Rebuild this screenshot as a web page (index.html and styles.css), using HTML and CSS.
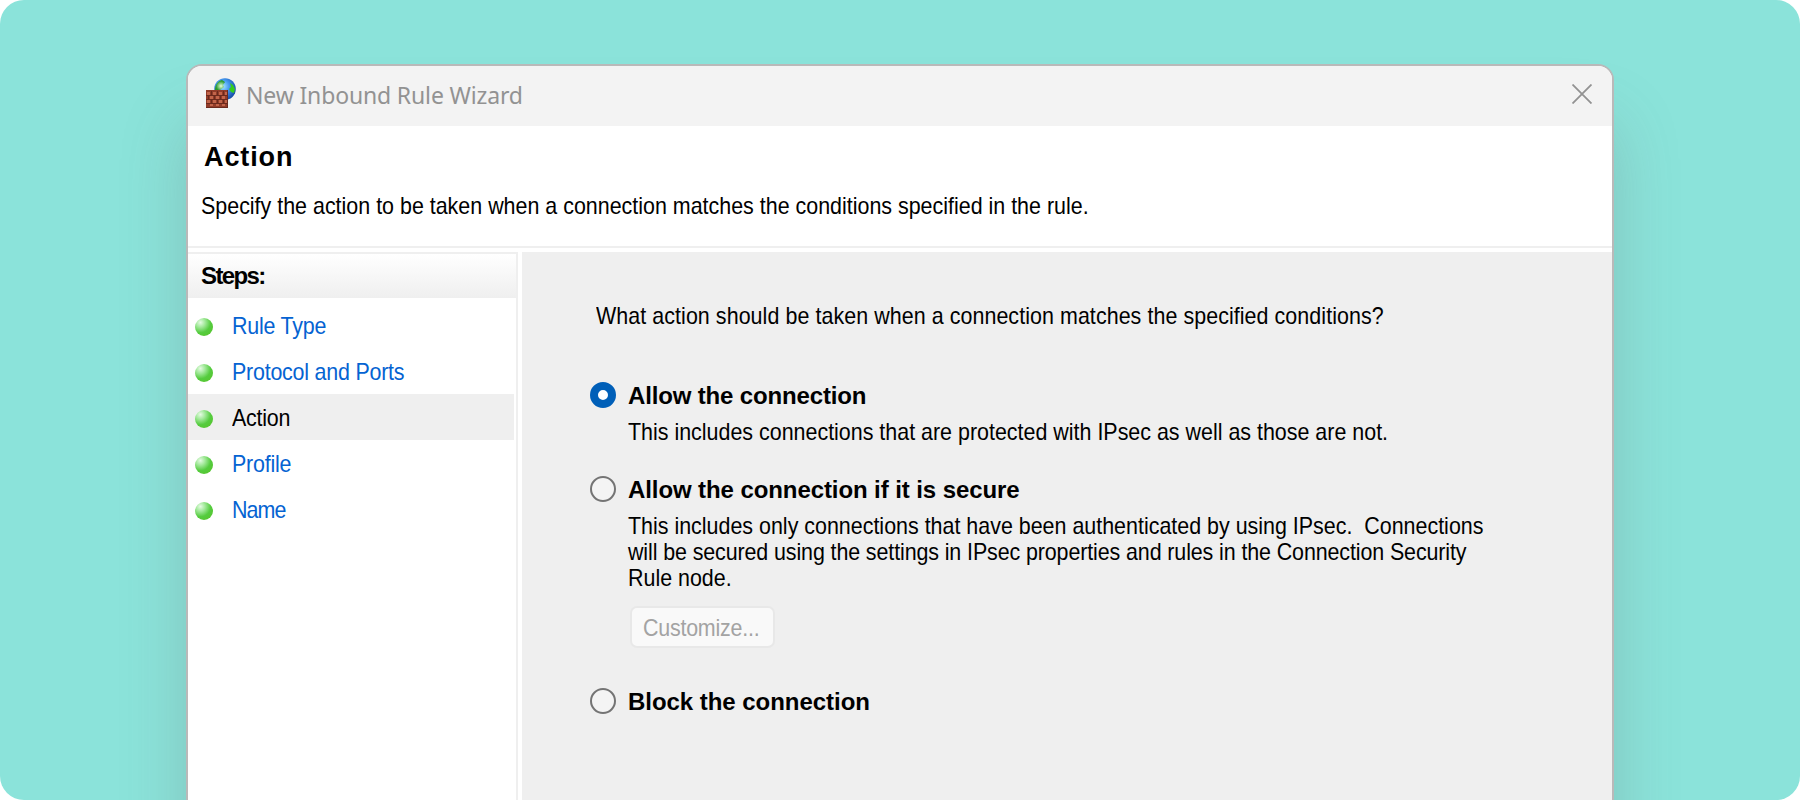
FILE: index.html
```html
<!DOCTYPE html>
<html lang="en">
<head>
<meta charset="utf-8">
<title>New Inbound Rule Wizard</title>
<link rel="stylesheet" href="styles.css">
</head>
<body>
<main class="stage">
  <section class="window">
    <header class="titlebar">
      <svg class="app-icon" width="30" height="30" viewBox="0 0 30 30">
        <defs>
          <radialGradient id="globe" cx="40%" cy="38%" r="65%">
            <stop offset="0" stop-color="#a5e6ff"/><stop offset=".45" stop-color="#4499f2"/><stop offset="1" stop-color="#164ba5"/>
          </radialGradient>
          <radialGradient id="land" cx="60%" cy="60%"><stop offset="0" stop-color="#e5ffdc"/><stop offset="1" stop-color="#2a9a2f"/></radialGradient>
        </defs>
        <circle cx="19" cy="11" r="10.8" fill="url(#globe)"/>
        <path d="M9 12C9 7 12 3 16 2l3 2-2 3 1 2-4 3z" fill="url(#land)"/>
        <path d="M24 5l3 2 2 4-1 4-3-1-2-3 2-2z" fill="#35cc1d"/>
        <path d="M0 12h22v18H0z" fill="#923c29"/>
        <path d="M1 14h3v3H1zM7 14h3v3H7zM13 14h3v3h-3zM19 14h2v3h-2zM4 18h3v3H4zM10 18h3v3h-3zM16 18h3v3h-3zM1 22h3v3H1zM7 22h3v3H7zM13 22h3v3h-3zM19 22h2v3h-2zM4 26h3v2H4zM10 26h3v2h-3zM16 26h3v2h-3z" fill="#c2654a"/>
        <path d="M0 17.5h22M0 21.5h22M0 25.5h22M0 29.5h22M21.500 12v18" stroke="#6b2a1d" fill="none"/>
        <path d="M5.500 13v4M11.500 13v4M17.500 13v4M2.500 18v4M8.500 18v4M14.500 18v4M5.500 22v4M11.500 22v4M17.500 22v4" stroke="#6b2a1d" fill="none"/>
      </svg>
      <h1 class="title">New Inbound Rule Wizard</h1>
      <svg class="close" width="20" height="20" viewBox="0 0 20 20"><path d="M.5.5l19 19M19.500.5l-19 19" stroke="#929292" stroke-width="1.8"/></svg>
    </header>
    <div class="intro">
      <h2 class="page-name">Action</h2>
      <p class="page-desc narrow">Specify the action to be taken when a connection matches the conditions specified in the rule.</p>
    </div>
    <div class="body">
      <nav class="sidebar">
        <h3 class="steps-title"><span>Steps:</span></h3>
        <ul class="steps">
          <li class="step"><i class="dot"></i><span class="narrow">Rule Type</span></li>
          <li class="step"><i class="dot"></i><span class="narrow">Protocol and Ports</span></li>
          <li class="step current"><i class="dot"></i><span class="narrow">Action</span></li>
          <li class="step"><i class="dot"></i><span class="narrow">Profile</span></li>
          <li class="step"><i class="dot"></i><span class="narrow name">Name</span></li>
        </ul>
      </nav>
      <div class="content">
        <p class="question narrow">What action should be taken when a connection matches the specified conditions?</p>
        <div class="option allow">
          <i class="radio checked"></i>
          <b class="label">Allow the connection</b>
          <p class="note narrow">This includes connections that are protected with IPsec as well as those are not.</p>
        </div>
        <div class="option secure">
          <i class="radio"></i>
          <b class="label long">Allow the connection if it is secure</b>
          <p class="note narrow">This includes only connections that have been authenticated by using IPsec.  Connections
<span class="tight">will be secured using the settings in IPsec properties and rules in the Connection Security</span>
Rule node.</p>
          <button class="customize" disabled><span class="narrow">Customize...</span></button>
        </div>
        <div class="option">
          <i class="radio"></i>
          <b class="label block">Block the connection</b>
        </div>
      </div>
    </div>
  </section>
</main>
</body>
</html>
```
FILE: styles.css
```css
* { box-sizing: border-box; }
body { margin: 0; background: #fff; font: 24px/26px "Liberation Sans", Arial, sans-serif; color: #000; }
h1, h2, h3, p, ul { margin: 0; padding: 0; list-style: none; }
.stage { width: 1800px; height: 800px; padding: 64px 186px 0; border-radius: 24px; background: #8be3da; overflow: hidden; }
.window { width: 1428px; height: 900px; border: 2px solid #b9b9b9; border-radius: 16px; background: #fff; overflow: hidden; display: flex; flex-direction: column; box-shadow: 0 60px 64px rgba(100, 100, 100, .25); }
.titlebar { height: 60px; flex: none; display: flex; align-items: center; padding: 0 20px 0 18px; background: #f3f3f3; }
.app-icon { margin-top: -6px; }
.title { margin: -2px 0 0 10px; font: 23px/30px "Noto Sans", "Open Sans", sans-serif; letter-spacing: -.15px; color: #929292; }
.close { margin: -4px 0 0 auto; }
.intro { height: 122px; flex: none; padding: 17px 13px 0; border-bottom: 2px solid #efefef; }
.page-name { margin-left: 3px; font-size: 27px; line-height: 28px; letter-spacing: .9px; }
.page-desc { margin-top: 22px; white-space: nowrap; }
/* Condensed setting of the dialog typeface */
.narrow { display: inline-block; transform: scaleX(.893); transform-origin: left; }
.body { flex: 1; display: flex; gap: 4px; padding-top: 4px; }
.sidebar { width: 330px; border: solid #efefef; border-width: 2px 2px 0 0; }
.steps-title { height: 44px; padding: 9px 13px; font-size: 24px; letter-spacing: -1.6px; background: linear-gradient(#fff, #efefef); }
.steps { padding: 4px 2px 0 0; }
.step { height: 46px; display: flex; align-items: center; padding: 2px 7px 0; gap: 19px; color: #0563d2; letter-spacing: -.25px; }
.name { letter-spacing: -1px; }
.current { background: #efefef; color: #000; }
.dot { width: 18px; height: 18px; margin-top: 2px; border-radius: 50%; background: radial-gradient(circle at 30% 25%, #e5fbe3 0, #a3e99b 25%, #55cc3f 55%, #56c52e 85%, #75ba62 100%); }
.content { flex: 1; padding: 51px 0 0 68px; background: #efefef; }
.question { display: block; margin: 0 0 53px 6px; letter-spacing: .07px; }
.option { display: grid; grid-template-columns: 26px 1fr; column-gap: 12px; grid-template-rows: 26px; justify-items: start; }
.label { padding-top: 1px; letter-spacing: -.15px; }
.long { letter-spacing: -.09px; }
.block { letter-spacing: -.04px; }
.radio { width: 26px; height: 26px; border: 2px solid #747474; border-radius: 50%; background: #f4f4f4; }
.checked { border: 8px solid #005fb8; background: #fff; }
.note { grid-column: 2; margin-top: 11px; white-space: pre; }
.tight { letter-spacing: -.12px; }
.allow, .secure { margin-bottom: 41px; }
.allow { height: 53px; }
.secure { height: 171px; }
.customize { grid-column: 2; width: 145px; height: 42px; margin: 15px 0 0 2px; padding: 2px 0 0 11px; text-align: left; border: 2px solid #e8e8e8; border-radius: 7px; background: #f9f9f9; color: #a3a3a3; font: inherit; letter-spacing: -.25px; }
```
